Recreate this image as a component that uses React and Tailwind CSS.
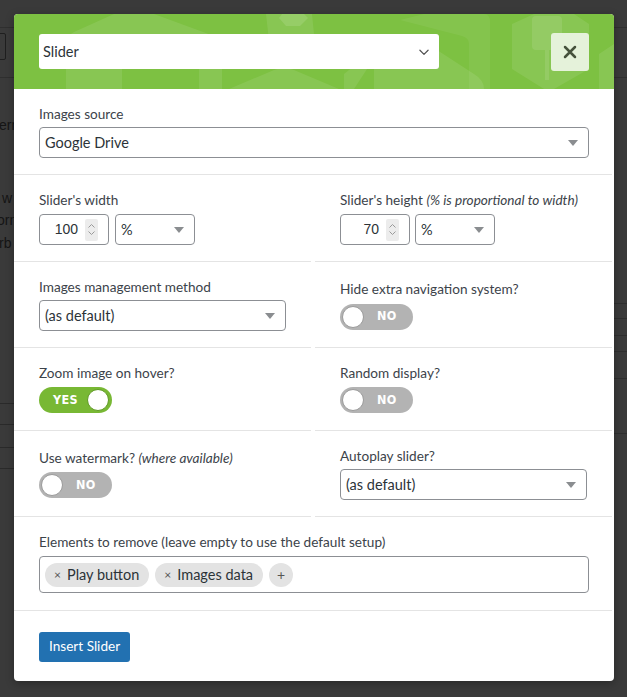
import React from "react";

const font = "font-['Lato',sans-serif]";

function Arrow() {
  return (
    <svg width="10" height="6" viewBox="0 0 10 6" className="shrink-0">
      <path d="M0 0 L10 0 L5 6 Z" fill="#8a8d90" />
    </svg>
  );
}

function Select({ value, className = "" }) {
  return (
    <div
      className={`h-[31px] border border-[#8c8f94] rounded-[4px] bg-white flex items-center justify-between pl-[5px] pr-[10px] text-[14.5px] text-[#2c3338] ${className}`}
    >
      <span>{value}</span>
      <Arrow />
    </div>
  );
}

function NumberInput({ value }) {
  return (
    <div className="w-[70px] h-[31px] border border-[#8c8f94] rounded-[4px] bg-white flex items-center justify-end pr-[10px] gap-[7px] text-[14px] text-[#2c3338] font-['Liberation_Sans',sans-serif]">
      <span>{value}</span>
      <div className="w-[13px] h-[22px] bg-[#ececec] rounded-[2px] flex flex-col items-center justify-center gap-[3px]">
        <svg width="7" height="4" viewBox="0 0 7 4">
          <path d="M0.5 3.5 L3.5 0.5 L6.5 3.5" fill="none" stroke="#9a9a9a" strokeWidth="1" />
        </svg>
        <svg width="7" height="4" viewBox="0 0 7 4">
          <path d="M0.5 0.5 L3.5 3.5 L6.5 0.5" fill="none" stroke="#9a9a9a" strokeWidth="1" />
        </svg>
      </div>
    </div>
  );
}

function Toggle({ on }) {
  return (
    <div
      className={`w-[73px] h-[26px] rounded-full relative flex items-center ${
        on ? "bg-[#78b834]" : "bg-[#b3b3b3]"
      }`}
    >
      <div
        className={`absolute top-[2px] w-[22px] h-[22px] rounded-full bg-white ${
          on ? "right-[3px] border border-[#5f9a25]" : "left-[2px] border border-[#9a9a9a]"
        }`}
      />
      <span
        className={`absolute text-white text-[12.5px] font-bold font-['DejaVu_Sans_Condensed','Liberation_Sans_Narrow',sans-serif] tracking-[0.3px] ${
          on ? "left-[14px]" : "left-[37px]"
        }`}
      >
        {on ? "YES" : "NO"}
      </span>
    </div>
  );
}

function Label({ children, className = "" }) {
  return <div className={`text-[13.6px] leading-[18px] text-[#3c434a] ${className}`}>{children}</div>;
}

function Tag({ children }) {
  return (
    <div className="h-[24px] rounded-full bg-[#e3e3e3] flex items-center pl-[9px] pr-[10px] gap-[6px] text-[14.5px] text-[#2c3338]">
      <span className="text-[12px] text-[#555]">×</span>
      <span>{children}</span>
    </div>
  );
}

function HeaderDecor() {
  return (
    <svg className="absolute inset-0" width="600" height="75" viewBox="0 0 600 75">
      <g fill="#ffffff" fillOpacity="0.09">
        <path d="M52 75 L52 30 Q52 22 60 18 L100 0 L140 0 L200 22 Q208 26 208 34 L208 75 L185 75 L185 40 Q185 32 176 30 L118 28 Q108 28 108 38 L108 75 Z" />
        <path d="M252 0 L298 0 L300 20 Q300 26 294 26 L262 26 Q254 26 254 18 Z" />
        <path d="M265 4 L272 12 L286 12 L294 4 L290 0 L268 0 Z" fillOpacity="0.12" />
        <path d="M215 75 L260 56 Q270 52 280 56 L325 75 Z" />
        <path d="M360 75 L360 40 Q360 30 370 28 L400 28 Q410 28 420 34 L460 60 Q470 66 470 75 Z" />
        <path d="M330 60 L345 48 L355 52 L340 75 L330 75 Z" />
        <path d="M386 6 L410 0 L470 0 Q476 0 476 8 L476 75 L455 75 L455 30 Q455 24 448 22 Z" fillOpacity="0.06" />
        <path d="M498 10 L520 0 L560 0 L575 10 L575 55 L540 75 L530 75 L498 55 Z" />
        <path d="M518 6 Q518 2 522 2 L544 2 Q548 2 548 6 L548 32 Q548 36 544 36 L522 36 Q518 36 518 32 Z" fillOpacity="0.1" />
        <rect x="531" y="36" width="4" height="30" fillOpacity="0.1" />
        <path d="M585 40 L600 30 L600 75 L585 75 Z" />
      </g>
    </svg>
  );
}

export default function App() {
  return (
    <div className={`w-[627px] h-[697px] bg-[#3a3a3a] relative overflow-hidden ${font}`}>
      {/* page behind overlay */}
      <div className="absolute inset-0">
        <div className="absolute left-0 right-0 top-[27px] h-px bg-[#2f2f2f]" />
        <div className="absolute left-0 right-0 top-[77px] h-px bg-[#2f2f2f]" />
        <div className="absolute left-[-8px] top-[33px] w-[14px] h-[27px] border border-[#1f1f1f] rounded-[2px]" />
        <div className="absolute left-[-1px] top-[115px] text-[14px] text-[#151515] font-['Liberation_Sans',sans-serif]">ern</div>
        <div className="absolute left-[2px] top-[188px] text-[14px] text-[#151515] font-['Liberation_Sans',sans-serif]">w</div>
        <div className="absolute left-[-3px] top-[210px] text-[14px] text-[#151515] font-['Liberation_Sans',sans-serif]">orn</div>
        <div className="absolute left-[-1px] top-[233px] text-[14px] text-[#151515] font-['Liberation_Sans',sans-serif]">rb</div>
        <div className="absolute left-0 w-[14px] top-[403px] h-px bg-[#2a2a2a]" />
        <div className="absolute left-0 w-[14px] top-[424px] h-px bg-[#2a2a2a]" />
        <div className="absolute left-0 w-[14px] top-[447px] h-px bg-[#2a2a2a]" />
        <div className="absolute left-0 w-[14px] top-[468px] h-px bg-[#2a2a2a]" />
        <div className="absolute right-0 w-[13px] top-[303px] h-px bg-[#2e2e2e]" />
        <div className="absolute right-0 w-[13px] top-[318px] h-px bg-[#2e2e2e]" />
        <div className="absolute right-0 w-[13px] top-[335px] h-px bg-[#2e2e2e]" />
        <div className="absolute right-0 w-[13px] top-[351px] h-px bg-[#2e2e2e]" />
        <div className="absolute right-0 w-[13px] top-[378px] h-px bg-[#2e2e2e]" />
        <div className="absolute right-0 w-[13px] top-[433px] h-px bg-[#2e2e2e]" />
      </div>

      {/* modal */}
      <div className="absolute left-[14px] top-[14px] w-[600px] h-[667px] bg-white rounded-[4px] overflow-hidden flex flex-col shadow-[0_2px_8px_rgba(0,0,0,0.3)]">
        {/* header */}
        <div className="relative h-[75px] shrink-0 bg-[#7dc142] px-[25px] flex items-center justify-between">
          <HeaderDecor />
          <div className="relative w-[400px] h-[35px] bg-white rounded-[3px] flex items-center justify-between pl-[4px] pr-[8px] text-[14.5px] text-[#2c3338]">
            <span>Slider</span>
            <svg width="14" height="14" viewBox="0 0 24 24" fill="none" stroke="#555" strokeWidth="2.2" strokeLinecap="round" strokeLinejoin="round">
              <path d="M5 9l7 7 7-7" />
            </svg>
          </div>
          <div className="relative w-[38px] h-[38px] bg-[#e5f2da] rounded-[3px] flex items-center justify-center">
            <svg width="14" height="14" viewBox="0 0 14 14" fill="none" stroke="#46523c" strokeWidth="2.5" strokeLinecap="round">
              <path d="M2 2 L12 12 M12 2 L2 12" />
            </svg>
          </div>
        </div>

        {/* body */}
        <div className="w-[598px]">
          <div className="px-[25px] py-4 border-b border-[#e4e4e4]">
            <Label className="mb-1">Images source</Label>
            <Select value="Google Drive" className="w-[550px]" />
          </div>

          <div className="grid grid-cols-[297px_297px] gap-x-[4px]">
            {/* row: width / height */}
            <div className="px-[25px] py-4 border-b border-[#e4e4e4] flex flex-col justify-center">
              <Label className="mb-[5px]">Slider's width</Label>
              <div className="flex gap-[6px]">
                <NumberInput value="100" />
                <Select value="%" className="w-[80px]" />
              </div>
            </div>
            <div className="px-[25px] py-4 border-b border-[#e4e4e4] flex flex-col justify-center">
              <Label className="mb-[5px] whitespace-nowrap">
                Slider's height <span className="italic">(% is proportional to width)</span>
              </Label>
              <div className="flex gap-[5px]">
                <NumberInput value="70" />
                <Select value="%" className="w-[80px]" />
              </div>
            </div>

            {/* row: management / hide nav */}
            <div className="px-[25px] py-4 border-b border-[#e4e4e4] flex flex-col justify-center">
              <Label className="mb-1">Images management method</Label>
              <Select value="(as default)" className="w-[247px]" />
            </div>
            <div className="px-[25px] py-4 border-b border-[#e4e4e4] flex flex-col justify-center">
              <Label className="mb-[6px]">Hide extra navigation system?</Label>
              <Toggle on={false} />
            </div>

            {/* row: zoom / random */}
            <div className="px-[25px] pt-4 pb-[17px] border-b border-[#e4e4e4] flex flex-col justify-center">
              <Label className="mb-[5px]">Zoom image on hover?</Label>
              <Toggle on={true} />
            </div>
            <div className="px-[25px] pt-4 pb-[17px] border-b border-[#e4e4e4] flex flex-col justify-center">
              <Label className="mb-[5px]">Random display?</Label>
              <Toggle on={false} />
            </div>

            {/* row: watermark / autoplay */}
            <div className="px-[25px] py-4 border-b border-[#e4e4e4] flex flex-col justify-center">
              <Label className="mb-[5px]">
                Use watermark? <span className="italic">(where available)</span>
              </Label>
              <Toggle on={false} />
            </div>
            <div className="px-[25px] py-4 border-b border-[#e4e4e4] flex flex-col justify-center">
              <Label className="mb-1">Autoplay slider?</Label>
              <Select value="(as default)" className="w-[247px]" />
            </div>
          </div>

          <div className="px-[25px] pt-4 pb-[17px] border-b border-[#e4e4e4]">
            <Label className="mb-[5px]">Elements to remove (leave empty to use the default setup)</Label>
            <div className="w-[550px] h-[37px] border border-[#8c8f94] rounded-[4px] flex items-center pl-[5px] gap-[6px]">
              <Tag>Play button</Tag>
              <Tag>Images data</Tag>
              <div className="w-[24px] h-[24px] rounded-full bg-[#e3e3e3] flex items-center justify-center text-[14px] text-[#555]">+</div>
            </div>
          </div>
        </div>

        {/* footer */}
        <div className="px-[25px] pt-[21px] w-[600px]">
          <button className="h-[30px] px-[10px] bg-[#2271b1] rounded-[3px] text-white text-[13.6px] leading-none">
            Insert Slider
          </button>
        </div>
      </div>
    </div>
  );
}
